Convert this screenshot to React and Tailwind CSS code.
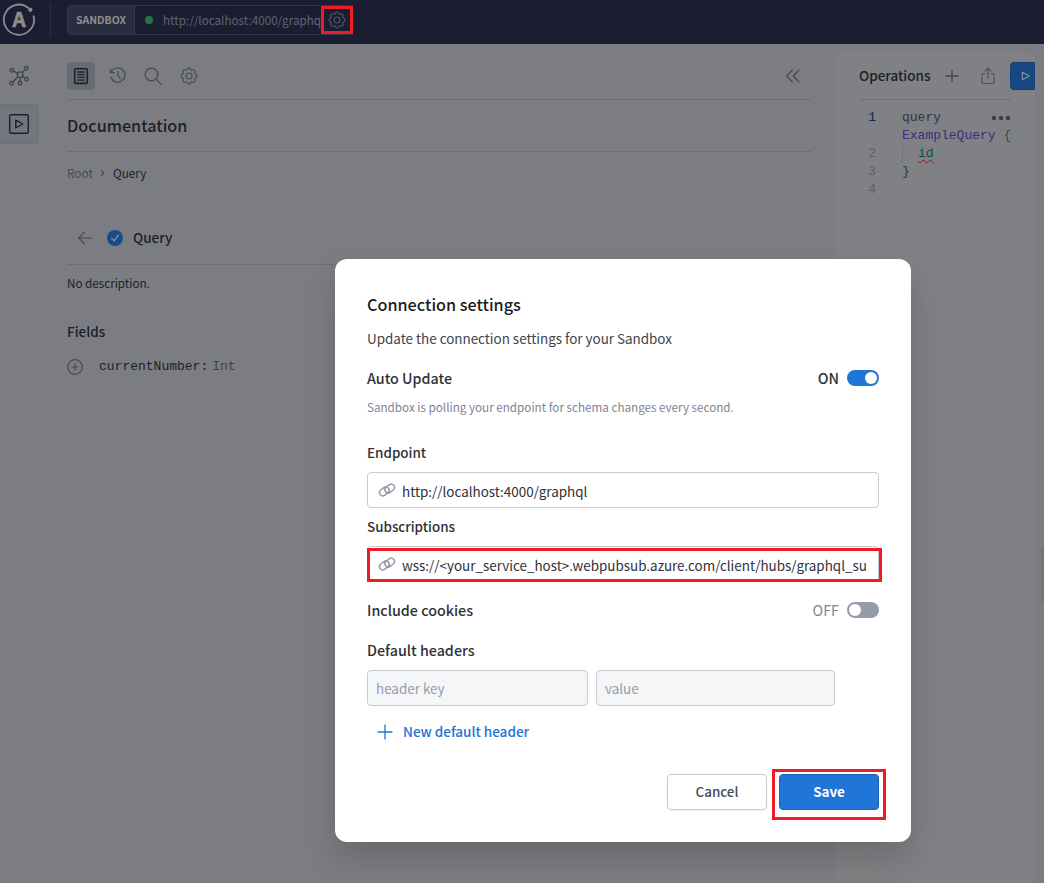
import React from 'react';

const GEAR =
  'M8.2 1.2 L9.8 1.2 C10.6 1.2 10.7 2.9 11.4 3.2 C12.1 3.5 13.3 2.4 13.9 2.9 L15.1 4.1 C15.6 4.7 14.5 5.9 14.8 6.6 C15.1 7.3 16.8 7.4 16.8 8.2 L16.8 9.8 C16.8 10.6 15.1 10.7 14.8 11.4 C14.5 12.1 15.6 13.3 15.1 13.9 L13.9 15.1 C13.3 15.6 12.1 14.5 11.4 14.8 C10.7 15.1 10.6 16.8 9.8 16.8 L8.2 16.8 C7.4 16.8 7.3 15.1 6.6 14.8 C5.9 14.5 4.7 15.6 4.1 15.1 L2.9 13.9 C2.4 13.3 3.5 12.1 3.2 11.4 C2.9 10.7 1.2 10.6 1.2 9.8 L1.2 8.2 C1.2 7.4 2.9 7.3 3.2 6.6 C3.5 5.9 2.4 4.7 2.9 4.1 L4.1 2.9 C4.7 2.4 5.9 3.5 6.6 3.2 C7.3 2.9 7.4 1.2 8.2 1.2 Z';

function Svg({ size = 18, sw = 1.2, className = '', children }) {
  return (
    <svg width={size} height={size} viewBox="0 0 18 18" fill="none" stroke="currentColor" strokeWidth={sw} strokeLinecap="round" strokeLinejoin="round" className={`shrink-0 ${className}`}>
      {children}
    </svg>
  );
}

const Gear = (p) => (
  <Svg {...p}>
    <path d={GEAR} />
    <circle cx="9" cy="9" r="3" />
  </Svg>
);

const LinkIcon = () => (
  <Svg size={18} sw={1.4} className="text-[#9299a8]">
    <rect x="-5.2" y="-3.3" width="10.4" height="6.6" rx="3.3" transform="translate(6.3 10.4) rotate(-38)" />
    <rect x="-5.2" y="-3.3" width="10.4" height="6.6" rx="3.3" transform="translate(11.7 7.6) rotate(-38)" />
  </Svg>
);

function Header() {
  return (
    <header className="flex h-11 shrink-0 items-start bg-[#1b1d30]">
      <div className="flex h-10 w-[51px] items-center border-r border-transparent pl-[3px]">
        <svg width="34" height="34" viewBox="0 0 34 34" fill="none" className="text-[#8b8c92]">
          <path d="M25.6 5.1A15.1 15.1 0 1 0 30.6 13.2" stroke="currentColor" strokeWidth="1.8" strokeLinecap="round" />
          <circle cx="27.4" cy="6.8" r="2.1" fill="currentColor" />
          <text x="16" y="23.8" textAnchor="middle" fill="currentColor" stroke="currentColor" strokeWidth=".6" fontFamily="Noto Sans CJK SC, sans-serif" fontWeight="700" fontSize="20.5">A</text>
        </svg>
      </div>
      <div className="mt-1 h-8 w-px -ml-px bg-[#2b3045]" />
      <div className="ml-4 mt-[5px] flex h-[30px] w-[286px] overflow-hidden rounded border border-[#303850]">
        <div className="flex w-[67px] items-center justify-center border-r border-[#303850] bg-[#2a2d3d] text-[10.5px] font-bold text-[#8b8d92]">SANDBOX</div>
        <div className="flex flex-1 items-center">
          <span className="ml-[10px] size-2 rounded-full bg-[#27724a]" />
          <span className="ml-[10px] w-[158px] whitespace-nowrap text-[11.7px] text-[#5f6577]">http://localhost:4000/graphq</span>
          <Gear size={18} className="ml-[7px] text-[#4f5566]" />
        </div>
      </div>
    </header>
  );
}

function Sidebar() {
  return (
    <nav className="w-[51px] shrink-0 border-r border-[#76797e] pt-[21px]">
      <div className="pl-[8px]">
        <svg width="22" height="22" viewBox="0 0 22 22" fill="none" stroke="#3f434d" strokeWidth="1.3">
          <circle cx="12.2" cy="9.7" r="2.9" />
          <circle cx="4" cy="5.3" r="1.8" />
          <circle cx="18.3" cy="3.3" r="1.8" />
          <circle cx="18.4" cy="14.3" r="1.8" />
          <circle cx="12" cy="18.3" r="1.8" />
          <circle cx="3.6" cy="18.3" r="1.8" />
          <path d="M5.6 6.2l4 2.1M14.2 7.5l2.8-2.9M14.7 11l2.1 2.2M12.1 12.6v3.9M10 11.7l-5.1 5.3" />
        </svg>
      </div>
      <div className="mt-[17px] flex h-10 w-[39px] items-center rounded-r border border-l-0 border-[#6c7178] bg-[#72777f] pl-[8px]">
        <svg width="22" height="22" viewBox="0 0 22 22" fill="none" stroke="#1c202b" strokeWidth="1.4" strokeLinejoin="round">
          <rect x="1.7" y="1.7" width="18.6" height="18.6" rx="1.5" />
          <path d="M7.8 7v8l7-4z" />
        </svg>
      </div>
    </nav>
  );
}

function Docs() {
  return (
    <main className="flex min-w-0 flex-1 flex-col pl-4 pr-6 text-[#1b1f27]">
      <div className="flex h-14 items-center border-b border-[#6b6e73] pt-2 text-[#454a54]">
        <div className="flex size-7 items-center justify-center rounded bg-[#676c72]">
          <Svg size={18} sw={1.6} className="text-[#1c202b]">
            <rect x="2.7" y="1.8" width="12.6" height="14.6" rx="1" />
            <path d="M5.2 5h7.6M5.2 7.7h7.6M5.2 10.4h7.6M5.2 13.1h7.6" strokeWidth="1.3" strokeLinecap="butt" />
          </Svg>
        </div>
        <Svg size={18} className="ml-[14px]">
          <path d="M2.2 5.2A7.2 7.2 0 1 1 1.9 10M1.5 2v3.7h3.8M9 4.6V9l2.4 2.6" />
        </Svg>
        <Svg size={18} className="ml-[17px]">
          <circle cx="7.5" cy="7.5" r="6.3" />
          <path d="M12.1 12.1l4.9 4.9" />
        </Svg>
        <Gear size={18} className="ml-[18px]" />
        <Svg size={18} sw={1.3} className="ml-auto mr-[9px]">
          <path d="M8.2 3.2L2.6 9l5.6 5.8M14.8 3.2L9.2 9l5.6 5.8" />
        </Svg>
      </div>
      <h1 className="flex h-[52px] items-center border-b border-[#6b6e73] text-[16.2px] font-medium">Documentation</h1>
      <div className="flex h-[43px] items-center pb-px text-[11.8px]">
        <span className="text-[#454a54]">Root</span>
        <Svg size={8} sw={3} className="ml-[6px] mr-[6px] text-[#454a54]"><path d="M6 4l5 5-5 5" /></Svg>
        <span>Query</span>
      </div>
      <div className="mt-[17px] flex h-[53px] items-center border-b border-[#6b6e73]">
        <Svg size={18} className="ml-[9px] text-[#454a54]"><path d="M15.5 9H3M8.5 3.2L2.8 9l5.7 5.8" /></Svg>
        <Svg size={16} sw={1.4} className="ml-[13px]">
          <circle cx="9" cy="9" r="9" fill="#194b86" stroke="none" />
          <path d="M5.2 9.4l2.7 2.8 5-6.4" stroke="#8d96a3" />
        </Svg>
        <span className="ml-[10px] pb-[2px] text-[13.5px] font-medium">Query</span>
      </div>
      <p className="flex h-9 items-center pb-px text-[11.65px]">No description.</p>
      <h2 className="mt-[12px] flex h-9 items-center text-[13.5px] font-medium">Fields</h2>
      <div className="flex h-[35px] items-center font-['Liberation_Mono',monospace] text-[13px]">
        <Svg size={16} sw={1.4} className="text-[#454a54]">
          <circle cx="9" cy="9" r="8.2" />
          <path d="M9 5.5v7M5.5 9h7" />
        </Svg>
        <span className="ml-4 pt-px">currentNumber:</span>
        <span className="ml-1 pt-px text-[#3d424f]">Int</span>
      </div>
    </main>
  );
}

function Code({ n, active, children }) {
  return (
    <div className="flex">
      <span className={`w-[17px] text-right ${active ? 'text-[#16224e]' : 'text-[#5d6065]'}`}>{n}</span>
      <div className="ml-[26px] flex-1 whitespace-pre">{children}</div>
    </div>
  );
}

function Operations() {
  return (
    <aside className="mr-[9px] mt-2 w-[200px] shrink-0 overflow-hidden rounded-t-lg bg-[#808184]">
      <div className="flex h-[47px] items-center pl-6 pt-px">
        <span className="w-[84px] shrink-0 pb-px text-[13.5px] font-medium text-[#1b1f27]">Operations</span>
        <Svg size={18} sw={1.4} className="text-[#454a54]"><path d="M9 3v12M3 9h12" /></Svg>
        <Svg size={18} sw={1.2} className="ml-[18px] text-[#4f535c]">
          <path d="M6 6.5H4a1 1 0 0 0-1 1v8a1 1 0 0 0 1 1h10a1 1 0 0 0 1-1v-8a1 1 0 0 0-1-1h-2M9 11.5V1.5M6 4.2l3-3 3 3" />
        </Svg>
        <div className="ml-[13px] flex h-7 w-7 shrink-0 items-center rounded-l border border-[#143f73] bg-[#184882] pl-[9px]">
          <Svg size={12} sw={1.7} className="text-[#8790a0]"><path d="M3.5 3.5v11l10.5-5.5z" /></Svg>
        </div>
      </div>
      <div className="ml-6 mr-6 h-px bg-[#6f7175]" />
      <div className="relative pl-6 pt-[9px] font-['Liberation_Mono',monospace] text-[13px] leading-[18px] text-[#2e3448]">
        <Code n="1" active>
          query{'\n'}
          <span className="text-[#3a2f7c]">ExampleQuery</span> <span className="text-[#3f434d]">{'{'}</span>
        </Code>
        <Code n="2">
          <span className="flex h-[18px] border-l border-[#6f7175] pl-[15px]">
            <span className="text-[#17494a] underline decoration-[#8b1d24] decoration-wavy decoration-1 underline-offset-[2px]">id</span>
          </span>
        </Code>
        <Code n="3">{'}'}</Code>
        <Code n="4"> </Code>
        <svg width="20" height="6" viewBox="0 0 20 6" fill="#3a3e47" className="absolute right-6 top-[15px]">
          <circle cx="3" cy="3" r="2.2" /><circle cx="10" cy="3" r="2.2" /><circle cx="17" cy="3" r="2.2" />
        </svg>
      </div>
    </aside>
  );
}

function Field({ children }) {
  return (
    <div className="flex h-9 items-center overflow-hidden rounded border border-[#c6ccd6] pl-[10px] pr-[10px]">
      <LinkIcon />
      <span className="ml-[6px] whitespace-nowrap pt-[2px] text-[13.43px]">{children}</span>
    </div>
  );
}

function Dialog() {
  return (
    <section className="h-[583px] w-[576px] rounded-xl bg-white px-8 pt-[31px] text-[13.43px] text-[#2f3137] shadow-[0_16px_32px_rgba(0,0,0,0.16)]">
      <h2 className="flex h-7 items-center text-[16.2px] font-medium text-[#191c23]">Connection settings</h2>
      <p className="mt-[8px] flex h-6 items-center text-[#414349]">Update the connection settings for your Sandbox</p>
      <div className="mt-4 flex h-6 items-center justify-between text-[14.3px] font-medium">
        <span>Auto Update</span>
        <span className="flex items-center gap-2">ON
          <span className="flex h-4 w-8 items-center justify-end rounded-full bg-[#2075d6] px-[2px]"><span className="size-3 rounded-full bg-white" /></span>
        </span>
      </div>
      <p className="mt-[7px] flex h-5 items-center text-[11.66px] text-[#7d8494]">Sandbox is polling your endpoint for schema changes every second.</p>
      <label className="mt-[23px] flex h-6 items-center font-medium">Endpoint</label>
      <div className="mt-[8px]"><Field>http://localhost:4000/graphql</Field></div>
      <label className="mt-[6px] flex h-6 items-center font-medium">Subscriptions</label>
      <div className="relative mt-[8px]">
        <Field>wss://&lt;your_service_host&gt;.webpubsub.azure.com/client/hubs/graphql_su</Field>
        <div className="absolute -right-[3px] bottom-0 left-0 top-[2px] border-[3px] border-[#ee1c25]" />
      </div>
      <div className="mt-4 flex h-6 items-center justify-between text-[14.3px] font-medium">
        <span>Include cookies</span>
        <span className="flex items-center gap-2 font-normal text-[#7d8494]">OFF
          <span className="flex h-4 w-8 items-center rounded-full bg-[#959ba8] px-[2px]"><span className="size-3 rounded-full bg-white" /></span>
        </span>
      </div>
      <div className="mt-4 flex h-6 items-center text-[14.3px] font-medium">Default headers</div>
      <div className="mt-2 flex gap-2 text-[#959dab]">
        <div className="flex h-9 w-[221px] items-center rounded border border-[#c6ccd6] bg-[#f4f6f8] pl-2 pt-px">header key</div>
        <div className="flex h-9 w-[239px] items-center rounded border border-[#c6ccd6] bg-[#f4f6f8] pl-2 pt-px">value</div>
      </div>
      <div className="mt-[14px] flex h-6 items-center pl-[9px] text-[13.5px] font-medium text-[#2075d6]">
        <Svg size={18} sw={1.3}><path d="M9 2v14M2 9h14" /></Svg>
        <span className="ml-[9px] pb-px">New default header</span>
      </div>
      <div className="mt-[30px] flex justify-end gap-3">
        <button className="h-9 w-[100px] rounded border border-[#c9cacd] bg-white pb-px font-medium text-[#454a58] shadow-[0_1px_3px_rgba(0,0,0,0.06)]">Cancel</button>
        <div className="relative">
          <button className="h-9 w-[100px] rounded border border-[#1b62b5] bg-[#2075d6] pb-px font-bold text-white">Save</button>
          <div className="absolute -bottom-[10px] -left-[7px] -right-[7px] -top-[5px] border-[3px] border-[#ee1c25]" />
        </div>
      </div>
    </section>
  );
}

export default function App() {
  return (
    <div className="relative flex h-[883px] w-[1044px] flex-col overflow-hidden bg-[#7c7d82] font-['Noto_Sans_CJK_SC',sans-serif]">
      <Header />
      <div className="relative flex flex-1">
        <Sidebar />
        <Docs />
        <Operations />
        <div className="absolute right-0 top-[503px] h-14 w-[3px] rounded-l bg-[#74757b]" />
      </div>
      <div className="absolute left-[321px] top-[6px] h-7 w-8 border-[3px] border-[#ee1c25]" />
      <div className="absolute left-[335px] top-[259px]"><Dialog /></div>
    </div>
  );
}
